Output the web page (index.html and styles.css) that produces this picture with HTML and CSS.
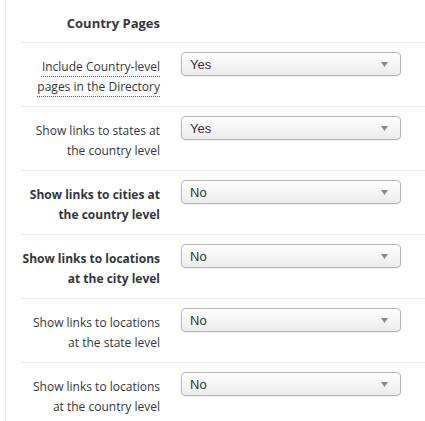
FILE: index.html
```html
<!DOCTYPE html>
<html>
<head>
<meta charset="utf-8">
<link rel="stylesheet" href="styles.css">
</head>
<body>
<div class="panel">
  <div class="title">Country Pages</div>
  <div class="row">
    <div class="label"><span class="tip">Include Country-level pages in the Directory</span></div>
    <div class="select"><span>Yes</span><svg class="arrow" width="7" height="5" viewBox="0 0 7 5"><path d="M0 0H7L3.5 5Z" fill="#8a8a8a"/></svg></div>
  </div>
  <div class="row">
    <div class="label">Show links to states at the country level</div>
    <div class="select"><span>Yes</span><svg class="arrow" width="7" height="5" viewBox="0 0 7 5"><path d="M0 0H7L3.5 5Z" fill="#8a8a8a"/></svg></div>
  </div>
  <div class="row">
    <div class="label bold">Show links to cities at the country level</div>
    <div class="select"><span>No</span><svg class="arrow" width="7" height="5" viewBox="0 0 7 5"><path d="M0 0H7L3.5 5Z" fill="#8a8a8a"/></svg></div>
  </div>
  <div class="row">
    <div class="label bold">Show links to locations at the city level</div>
    <div class="select"><span>No</span><svg class="arrow" width="7" height="5" viewBox="0 0 7 5"><path d="M0 0H7L3.5 5Z" fill="#8a8a8a"/></svg></div>
  </div>
  <div class="row">
    <div class="label">Show links to locations at the state level</div>
    <div class="select"><span>No</span><svg class="arrow" width="7" height="5" viewBox="0 0 7 5"><path d="M0 0H7L3.5 5Z" fill="#8a8a8a"/></svg></div>
  </div>
  <div class="row">
    <div class="label">Show links to locations at the country level</div>
    <div class="select"><span>No</span><svg class="arrow" width="7" height="5" viewBox="0 0 7 5"><path d="M0 0H7L3.5 5Z" fill="#8a8a8a"/></svg></div>
  </div>
</div>
</body>
</html>
```

FILE: styles.css
```css
html, body {
  margin: 0;
  padding: 0;
  background: #fff;
}
body {
  font-family: "Open Sans", "Liberation Sans", sans-serif;
  color: #32373c;
  font-size: 12px;
}
.panel {
  margin-left: 5px;
  border-left: 1px solid #e5e5e5;
  padding-left: 15px;
  min-height: 421px;
  overflow: hidden;
}
.title {
  width: 139px;
  text-align: right;
  font-weight: 700;
  font-size: 13px;
  line-height: 20px;
  padding: 13px 0 9px;
}
.row {
  display: grid;
  grid-template-columns: 139px 220px;
  column-gap: 21px;
  align-items: start;
  border-top: 1px solid #ececec;
  height: 63px;
}
.label {
  text-align: right;
  line-height: 20px;
  padding-top: 14px;
}
.label.bold {
  font-weight: 700;
}
.tip {
  text-decoration: underline dotted #0073aa;
  text-underline-offset: 5px;
  text-decoration-thickness: 1px;
}
.select {
  margin-top: 9px;
  height: 22px;
  border: 1px solid #b4b4b4;
  border-radius: 4px;
  background: linear-gradient(#ffffff, #ececec);
  display: flex;
  align-items: center;
  justify-content: space-between;
  padding: 0 12px 0 8px;
  font-family: "Liberation Sans", Arial, sans-serif;
  font-size: 13px;
  color: #333;
  box-shadow: 0 1px 1px rgba(0,0,0,0.06);
}
.arrow {
  display: block;
}
```
